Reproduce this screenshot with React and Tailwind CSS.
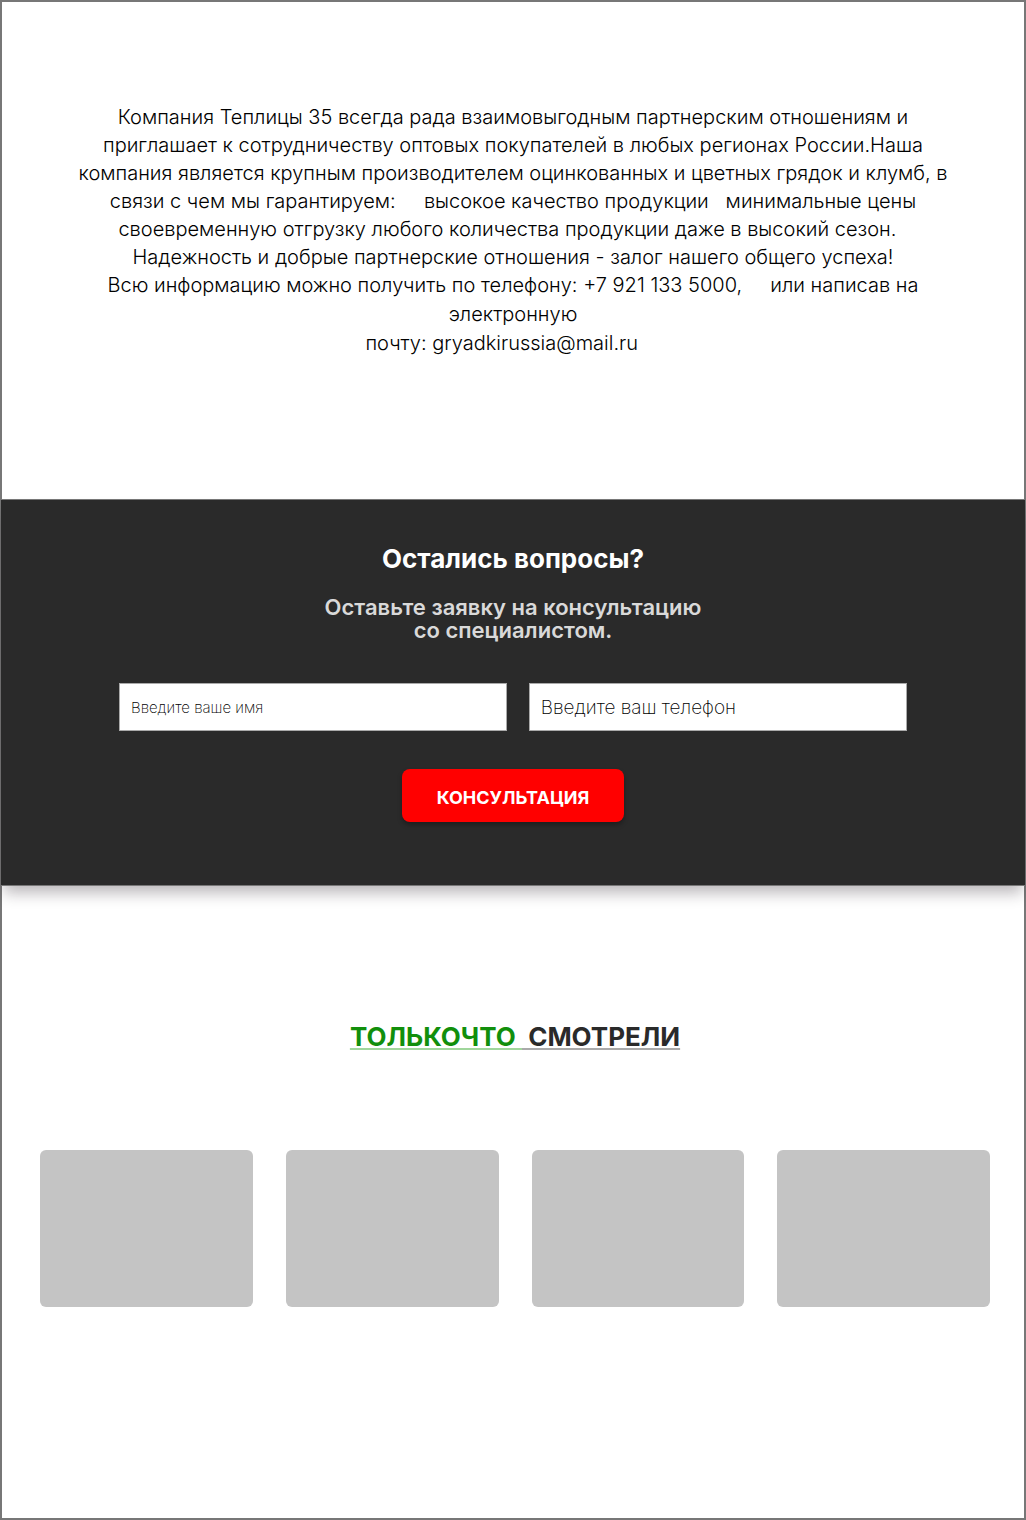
const cards = ['Товар 1', 'Товар 2', 'Товар 3', 'Товар 4'];

const aboutLines = [
  'Компания Теплицы 35 всегда рада взаимовыгодным партнерским отношениям и',
  'приглашает к сотрудничеству оптовых покупателей в любых регионах России.Наша',
  'компания является крупным производителем оцинкованных и цветных грядок и клумб, в',
  'связи с чем мы гарантируем:\u00a0\u00a0\u00a0\u00a0 высокое качество продукции\u00a0\u00a0 минимальные цены',
  'своевременную отгрузку любого количества продукции даже в высокий сезон.\u00a0\u00a0',
  'Надежность и добрые партнерские отношения - залог нашего общего успеха!',
];

const contactLines = [
  'Всю информацию можно получить по телефону: +7 921 133 5000,\u00a0\u00a0\u00a0\u00a0 или написав на',
  'электронную',
  'почту: gryadkirussia@mail.ru\u00a0\u00a0\u00a0\u00a0',
];

export default function App() {
  return (
    <div className="flex min-h-screen flex-col border-2 border-[#777] bg-white font-['Inter',sans-serif] text-black">
      <section className="px-6 pt-[101px] pb-[141px] text-center text-[20px] font-light">
        <div className="leading-[28px]">
          {aboutLines.map((line) => (
            <p key={line}>{line}</p>
          ))}
        </div>
        <div className="leading-[29px]">
          {contactLines.map((line) => (
            <p key={line}>{line}</p>
          ))}
        </div>
      </section>

      <section className="-mx-px border-y border-[#777] bg-[#2a2a2a] px-[118px] pt-[41px] pb-[63px] text-center shadow-[0_10px_14px_-3px_rgba(30,20,30,0.3)]">
        <h2 className="text-[26px] leading-[36px] font-bold text-white">Остались вопросы?</h2>
        <p className="mt-[19px] text-[22px] leading-[23px] font-semibold text-[#d9d9d9]">
          Оставьте заявку на консультацию
          <br />
          со специалистом.
        </p>
        <form className="mt-[41px]">
          <div className="flex gap-[22px]">
            <input
              type="text"
              aria-label="Введите ваше имя"
              placeholder="Введите ваше имя"
              className="h-12 min-w-0 flex-[388] border border-[#aaa] bg-white px-[11px] text-[15px] font-extralight placeholder:text-black"
            />
            <input
              type="tel"
              aria-label="Введите ваш телефон"
              placeholder="Введите ваш телефон"
              className="h-12 min-w-0 flex-[378] border border-[#aaa] bg-white px-[11px] text-[19px] font-extralight placeholder:text-black"
            />
          </div>
          <button
            type="button"
            className="mt-[38px] h-[53px] w-[222px] rounded-lg bg-[#ff0000] pt-1 text-[18px] font-bold text-white shadow-[0_3px_5px_rgba(0,0,0,0.3)]"
          >
            КОНСУЛЬТАЦИЯ
          </button>
        </form>
      </section>

      <section className="pt-[132px] pr-[34px] pb-12 pl-[38px]">
        <h2 className="text-center text-[26px] leading-[38px] font-bold text-[#2a2a2a]">
          <span className="text-[#118f0c] underline decoration-[#a0d69c] decoration-2 underline-offset-2">
            {'ТОЛЬКОЧТО\u00a0'}
          </span>
          <span className="underline decoration-[#aaa] decoration-2 underline-offset-2">{'\u00a0СМОТРЕЛИ'}</span>
        </h2>
        <ul className="mt-[94px] grid grid-cols-4 gap-[33px]">
          {cards.map((name) => (
            <li key={name} aria-label={name} className="h-[157px] rounded-md bg-[#c4c4c4]" />
          ))}
        </ul>
      </section>
    </div>
  );
}
